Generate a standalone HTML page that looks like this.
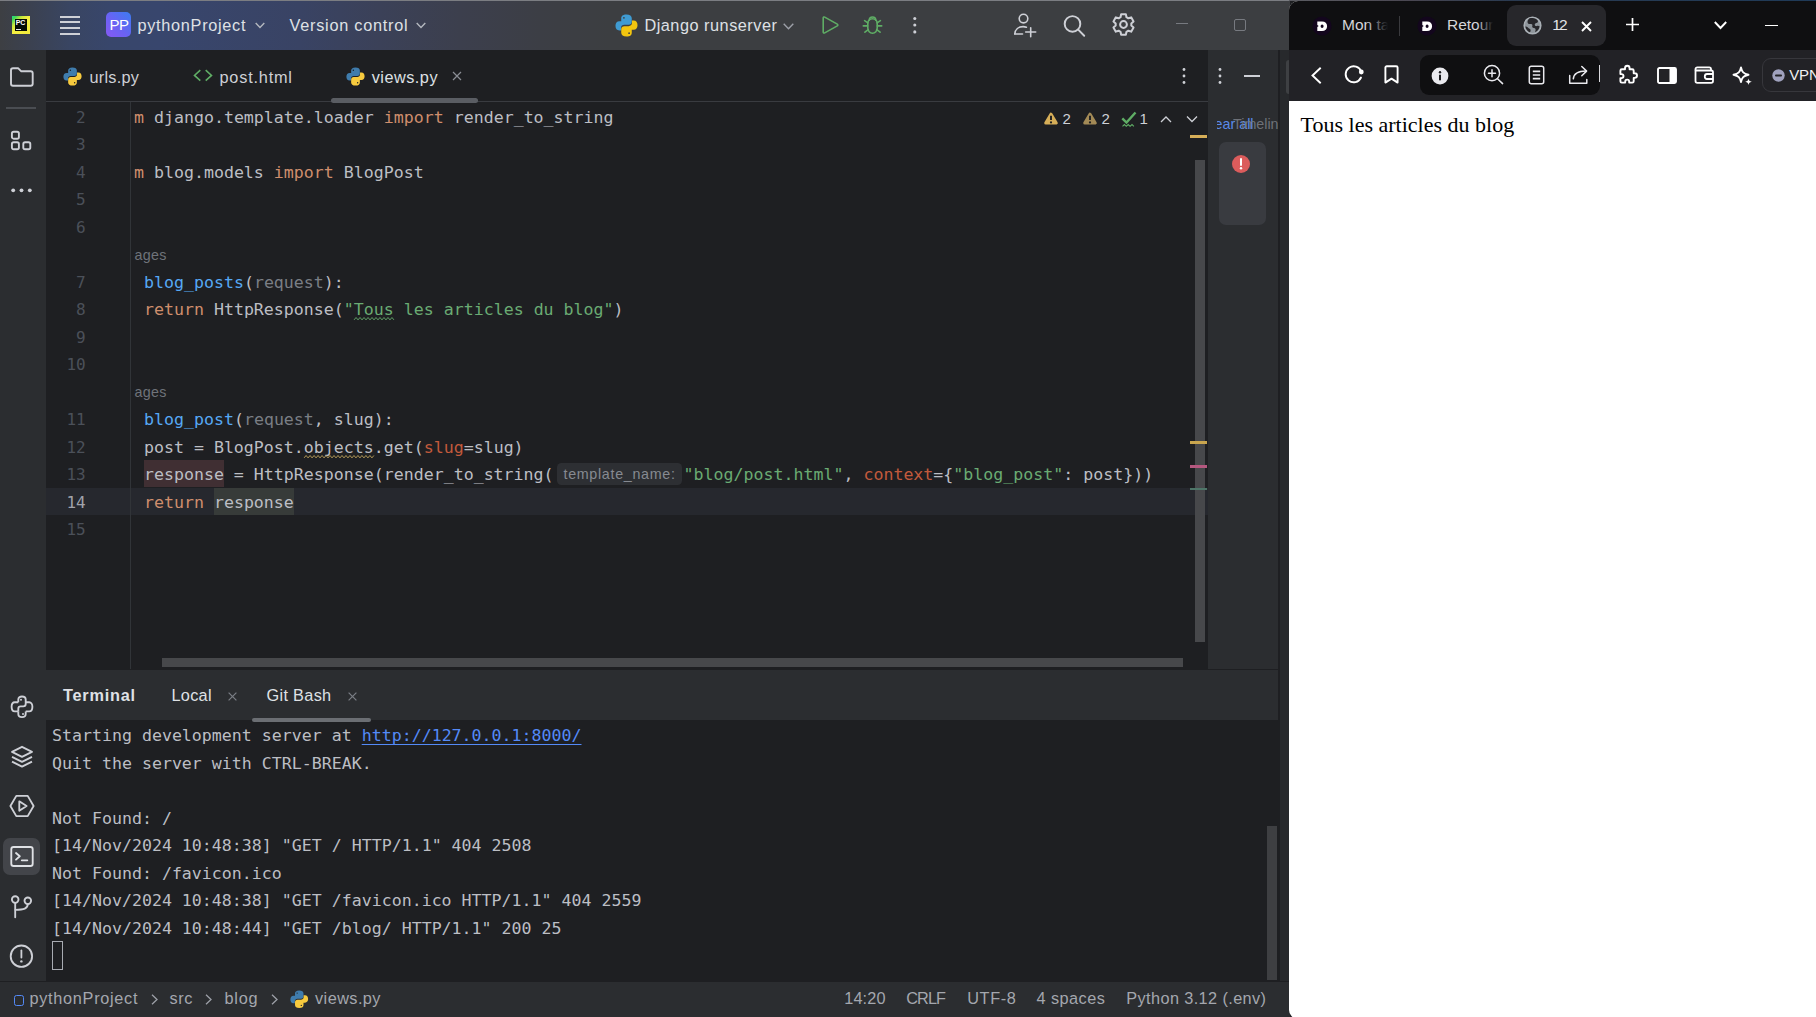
<!DOCTYPE html>
<html lang="fr">
<head>
<meta charset="utf-8">
<title>PyCharm + navigateur</title>
<style>
*{box-sizing:border-box;margin:0;padding:0}
html,body{width:1816px;height:1017px;overflow:hidden;background:#1e1f22}
body{position:relative;font-family:"Liberation Sans",sans-serif;color:#dfe1e5}
.abs{position:absolute}
.t{position:absolute;white-space:pre;line-height:1}
svg{position:absolute;overflow:visible}
/* ---------- IDE ---------- */
#ide{position:absolute;left:0;top:0;width:1290px;height:1017px;background:#1e1f22;overflow:hidden}
#titlebar{position:absolute;left:0;top:0;width:1290px;height:50px;
 background:linear-gradient(90deg,#3d3f43 0px,#3b4150 30px,#394562 70px,#38466b 110px,#38466d 160px,#394364 300px,#3b4158 380px,#3c3f4d 460px,#3c3e45 540px,#3c3e41 610px,#3c3e41 1290px)}
#topline{position:absolute;left:0;top:0;width:1290px;height:1px;background:#7b7d82}
#leftbar{position:absolute;left:0;top:50px;width:46px;height:932px;background:#2b2d30}
#tabbar{position:absolute;left:46px;top:50px;width:1162px;height:52px;background:#1e1f22;border-bottom:1px solid #393b40}
#editor{position:absolute;left:46px;top:102px;width:1162px;height:568px;background:#1e1f22;overflow:hidden}
#rightpanel{position:absolute;left:1208px;top:50px;width:70px;height:620px;background:#2b2d30}
#rightstrip{position:absolute;left:1277.5px;top:50px;width:12.5px;height:932px;background:#27292c;border-left:2.3px solid #1e1f22}
#termhead{position:absolute;left:46px;top:670px;width:1232px;height:50px;background:#2b2d30}
#term{position:absolute;left:46px;top:720px;width:1232px;height:262px;background:#1e1f22}
#status{position:absolute;left:0;top:981px;width:1290px;height:36px;background:#2b2d30;border-top:1px solid #1e1f22}
.ui{font-size:16.3px;color:#dfe1e5}
.code{font-family:"DejaVu Sans Mono","Liberation Mono",monospace;font-size:16.6px;color:#bcbec4}
.ln{position:absolute;left:46px;width:39.7px;text-align:right;font-family:"DejaVu Sans Mono","Liberation Mono",monospace;font-size:16px;color:#4b5059;line-height:1}
.k{color:#cf8e6d}.f{color:#56a8f5}.s{color:#6aab73}.g{color:#6f737a}.a{color:#c25a3c}
.cl{position:absolute;left:104px;white-space:pre;line-height:27.5px;height:27.5px}
.tl{position:absolute;left:52px;white-space:pre;line-height:27.5px;height:27.5px}
.u{color:#7a7e85}
.tw{}
.ww{}
.hintgap{display:inline-block;width:130px}
.inl{font-size:14.3px;color:#6f737a;letter-spacing:0.3px}
.hint{width:125px;height:22.6px;border-radius:4.5px;background:#2d2f33;color:#868a91;font-size:14.3px;line-height:22.6px;padding-left:7px;letter-spacing:0.68px;white-space:pre}
.lnk{color:#548af7;text-decoration:underline;text-underline-offset:3px;text-decoration-thickness:1px}
.st{font-size:16.3px;color:#a4a7ae}
/* ---------- Browser ---------- */
#br{position:absolute;left:1289px;top:1px;width:527px;height:1018px;background:#fff;border-top-left-radius:9px;border-bottom-left-radius:9px;overflow:hidden}
#brtabs{position:absolute;left:0;top:0;width:527px;height:49px;background:#0f0f11}
#brtool{position:absolute;left:0;top:49px;width:527px;height:51px;background:#222226}
.bt{font-size:15.5px;color:#d6d6da}
</style>
</head>
<body>
<div id="ide">
  <div id="titlebar"></div>
  <div id="topline"></div>
  <div id="leftbar"></div>
  <div id="tabbar"></div>
  <div id="editor"></div>
  <div id="rightpanel"></div>
  <div id="rightstrip"></div>
  <div id="termhead"></div>
  <div id="term"></div>
  <div id="status"></div>
  <!-- ===== title bar content ===== -->
  <!-- PyCharm logo -->
  <div class="abs" style="left:12px;top:16px;width:18.400px;height:18.400px;background:linear-gradient(135deg,#21d789 0%,#3fd75a 12%,#c8e83c 30%,#f4ef42 48%,#f1e93a 100%)"></div>
  <div class="abs" style="left:14.900px;top:18.900px;width:12.300px;height:12.300px;background:#050a05"></div>
  <div class="t" style="left:15.700px;top:19.400px;font-size:7px;font-weight:bold;color:#fff;letter-spacing:-0.2px">PC</div>
  <div class="abs" style="left:16.200px;top:28.700px;width:5px;height:1.200px;background:#e8e8e8"></div>
  <!-- hamburger -->
  <div class="abs" style="left:60px;top:15.7px;width:20px;height:2px;background:#ced0d6"></div>
  <div class="abs" style="left:60px;top:21.4px;width:20px;height:2px;background:#ced0d6"></div>
  <div class="abs" style="left:60px;top:27.1px;width:20px;height:2px;background:#ced0d6"></div>
  <div class="abs" style="left:60px;top:32.8px;width:20px;height:2px;background:#ced0d6"></div>
  <!-- project badge -->
  <div class="abs" style="left:106px;top:12px;width:25px;height:25px;border-radius:5px;background:linear-gradient(45deg,#8659f3 0%,#6a62f3 45%,#3b7cf2 100%)"></div>
  <div class="t" style="left:109.5px;top:17px;font-size:15px;color:#fff;letter-spacing:-0.6px">PP</div>
  <div class="t ui" id="t_proj" style="left:137.5px;top:16.5px;letter-spacing:0.7px">pythonProject</div>
  <svg style="left:255px;top:22px" width="10" height="7" viewBox="0 0 10 7"><path d="M0.7 0.9 L5 5.4 L9.3 0.9" fill="none" stroke="#b4b8bf" stroke-width="1.4"/></svg>
  <div class="t ui" id="t_vc" style="left:289.5px;top:16.5px;letter-spacing:0.74px">Version control</div>
  <svg style="left:416px;top:22px" width="10" height="7" viewBox="0 0 10 7"><path d="M0.7 0.9 L5 5.4 L9.3 0.9" fill="none" stroke="#b4b8bf" stroke-width="1.4"/></svg>
  <!-- run config -->
  <svg style="left:614.5px;top:13.5px" width="23" height="23" viewBox="0 0 24 24"><path d="M12 0.500C8 0.500 6.500 2.200 6.500 4.500V7.600H4.500C2 7.600 0.500 9.600 0.500 12.300C0.500 15.200 2 17.200 4.500 17.200H6.300V14.500C6.300 12.500 7.800 11.300 9.800 11.300H14.300C16.200 11.300 17.500 10 17.500 8.200V4.500C17.500 2 15.500 0.500 12 0.500z" fill="#3f9bd2"/><circle cx="9.300" cy="4" r="0.900" fill="#3c3e41"/><g transform="rotate(180 12 12)"><path d="M12 0.500C8 0.500 6.500 2.200 6.500 4.500V7.600H4.500C2 7.600 0.500 9.600 0.500 12.300C0.500 15.200 2 17.200 4.500 17.200H6.300V14.500C6.300 12.500 7.800 11.300 9.800 11.300H14.300C16.200 11.300 17.500 10 17.500 8.200V4.500C17.500 2 15.500 0.500 12 0.500z" fill="#f2c50f"/><circle cx="9.300" cy="4" r="0.900" fill="#3c3e41"/></g></svg>
  <div class="t ui" id="t_dj" style="left:644.4px;top:16.5px;letter-spacing:0.51px">Django runserver</div>
  <svg style="left:783px;top:23px" width="11" height="7" viewBox="0 0 11 7"><path d="M0.7 0.8 L5.5 5.7 L10.3 0.8" fill="none" stroke="#9da0a8" stroke-width="1.4"/></svg>
  <!-- run -->
  <svg style="left:821px;top:15px" width="20" height="20" viewBox="0 0 20 20"><path d="M2.2 2.9 C2.2 2.1 3 1.700 3.700 2.100 L16.300 9.100 C17 9.500 17 10.500 16.300 10.900 L3.700 17.900 C3 18.300 2.200 17.900 2.200 17.100 Z" fill="none" stroke="#5fad65" stroke-width="1.6" stroke-linejoin="round"/></svg>
  <!-- debug bug -->
  <svg style="left:862px;top:15px" width="21" height="20" viewBox="0 0 21 20"><g fill="none" stroke="#5fad65" stroke-width="1.6" stroke-linecap="round"><path d="M5.800 8.500 a4.700 4.700 0 0 1 9.400 0 v4.500 a4.700 5.200 0 0 1 -9.400 0 z"/><path d="M7.300 5.200 a3.200 3.200 0 0 1 6.400 0"/><path d="M5.600 10.900 H1.300 M15.400 10.900 H19.700 M5.900 7.800 L2.600 5.600 M15.100 7.800 L18.400 5.600 M6.300 14.600 L2.900 17.200 M14.700 14.600 L18.100 17.200"/></g></svg>
  <!-- kebab -->
  <svg style="left:912px;top:16px" width="6" height="18" viewBox="0 0 6 18"><g fill="#ced0d6"><circle cx="2.800" cy="2.500" r="1.550"/><circle cx="2.800" cy="9" r="1.550"/><circle cx="2.800" cy="15.900" r="1.550"/></g></svg>
  <!-- add user -->
  <svg style="left:1013px;top:13px" width="25" height="25" viewBox="0 0 25 25"><g fill="none" stroke="#ced0d6" stroke-width="1.6" stroke-linecap="round"><circle cx="10.500" cy="5.600" r="4.300"/><path d="M1.800 21 c0.300 -4.600 3.800 -7.400 8.300 -7.400 c1.200 0 2.300 0.200 3.300 0.600"/><path d="M1.800 21 H9.500"/><path d="M17.700 14.800 V23.800 M12.700 19 H22.700"/></g></svg>
  <!-- search -->
  <svg style="left:1062px;top:13px" width="25" height="25" viewBox="0 0 25 25"><g fill="none" stroke="#ced0d6" stroke-width="1.950" stroke-linecap="round"><circle cx="10.500" cy="10.900" r="7.800"/><path d="M16.200 16.600 L22.200 22.700"/></g></svg>
  <!-- gear -->
  <svg style="left:1111px;top:12.400px" width="25" height="25" viewBox="0 0 25 25"><g fill="none" stroke="#ced0d6" stroke-width="2" stroke-linejoin="round"><path d="M14.86 2.27 L10.14 2.27 L9.54 5.18 L7.64 6.27 L4.82 5.34 L2.46 9.43 L4.68 11.40 L4.68 13.60 L2.46 15.57 L4.82 19.66 L7.64 18.73 L9.54 19.82 L10.14 22.73 L14.86 22.73 L15.46 19.82 L17.36 18.73 L20.18 19.66 L22.54 15.57 L20.32 13.60 L20.32 11.40 L22.54 9.43 L20.18 5.34 L17.36 6.27 L15.46 5.18 Z"/><circle cx="12.500" cy="12.500" r="3.400"/></g></svg>
  <!-- window controls (inactive) -->
  <div class="abs" style="left:1176px;top:23px;width:12px;height:1.3px;background:#777a80"></div>
  <div class="abs" style="left:1234px;top:19px;width:12px;height:12px;border:1.3px solid #777a80;border-radius:2px"></div>

  <!-- ===== left tool bar icons ===== -->
  <svg style="left:9px;top:66px" width="26" height="22" viewBox="0 0 26 22"><path d="M2 4.200 C2 3.100 2.900 2.300 4 2.300 H9.300 L12.300 5.300 H21.700 C22.800 5.300 23.700 6.200 23.700 7.300 V17.700 C23.700 18.800 22.800 19.700 21.700 19.700 H4 C2.900 19.700 2 18.800 2 17.700 Z" fill="none" stroke="#ced0d6" stroke-width="1.900" stroke-linejoin="round"/></svg>
  <div class="abs" style="left:6px;top:107.200px;width:30px;height:1.600px;background:#4a4d52"></div>
  <svg style="left:10px;top:129px" width="24" height="24" viewBox="0 0 24 24"><g fill="none" stroke="#ced0d6" stroke-width="1.900"><rect x="1.900" y="2.700" width="7" height="7" rx="1.800"/><rect x="1.900" y="13.300" width="7" height="7" rx="1.800"/><rect x="13.300" y="13.300" width="7" height="7" rx="1.800"/></g></svg>
  <svg style="left:10px;top:186px" width="24" height="8" viewBox="0 0 24 8"><g fill="#ced0d6"><circle cx="3.200" cy="4.300" r="1.900"/><circle cx="11.500" cy="4.300" r="1.900"/><circle cx="19.800" cy="4.300" r="1.900"/></g></svg>
  <!-- python console -->
  <svg style="left:9.500px;top:695px" width="24" height="24" viewBox="0 0 24 24"><g fill="none" stroke="#ced0d6" stroke-width="1.850" stroke-linejoin="round"><path d="M8.300 7.200 V4.600 C8.300 2.700 9.800 1.500 12 1.500 C14.200 1.500 15.700 2.700 15.700 4.600 V9 C15.700 10.400 14.700 11.400 13.300 11.400 H10.700 C9.300 11.400 8.300 12.400 8.300 13.800 V16.400 M8.300 7.200 H4.800 C2.900 7.200 1.600 9 1.600 11.800 C1.600 14.600 2.900 16.400 4.800 16.400 H8.300"/><path d="M15.700 16.400 V19 C15.700 20.900 14.200 22.100 12 22.100 C9.800 22.100 8.300 20.900 8.300 19 V16.400 M15.700 16.400 H19.200 C21.100 16.400 22.400 14.600 22.400 11.800 C22.400 9 21.100 7.200 19.200 7.200 H15.700"/></g><circle cx="11" cy="4.700" r="1" fill="#ced0d6"/><circle cx="13" cy="18.900" r="1" fill="#ced0d6"/></svg>
  <!-- layers -->
  <svg style="left:10px;top:745px" width="24" height="24" viewBox="0 0 24 24"><g fill="none" stroke="#ced0d6" stroke-width="1.850" stroke-linejoin="round"><path d="M12 1.800 L22 6.800 L12 11.800 L2 6.800 Z"/><path d="M2 11.800 L12 16.800 L22 11.800"/><path d="M2 16.600 L12 21.600 L22 16.600"/></g></svg>
  <!-- services -->
  <svg style="left:9px;top:794px" width="26" height="24" viewBox="0 0 26 24"><g fill="none" stroke="#ced0d6" stroke-width="1.850" stroke-linejoin="round"><path d="M7.300 1.900 H18.700 L24.600 12 L18.700 22.100 H7.300 L1.400 12 Z"/><path d="M10.300 7.300 L17.600 12 L10.300 16.700 Z"/></g></svg>
  <!-- terminal (selected) -->
  <div class="abs" style="left:2.500px;top:838px;width:37px;height:37px;border-radius:7px;background:#43454a"></div>
  <svg style="left:10px;top:845px" width="24" height="23" viewBox="0 0 24 23"><g fill="none" stroke="#dfe1e5" stroke-width="1.850" stroke-linejoin="round" stroke-linecap="round"><rect x="1.300" y="2" width="21.400" height="19" rx="2.300"/><path d="M6 8 L9.800 11.300 L6 14.600"/><path d="M11.800 15.300 H17.300"/></g></svg>
  <!-- git -->
  <svg style="left:10px;top:894px" width="24" height="25" viewBox="0 0 24 25"><g fill="none" stroke="#ced0d6" stroke-width="1.850" stroke-linecap="round"><circle cx="5.200" cy="5.500" r="3.300"/><circle cx="17.800" cy="6.800" r="3.300"/><path d="M5.200 8.800 V23.300"/><path d="M17.800 10.100 C17.800 14.500 14 15.800 5.400 15.800"/></g></svg>
  <!-- problems -->
  <svg style="left:9px;top:944px" width="25" height="25" viewBox="0 0 25 25"><circle cx="12.400" cy="12.200" r="10.700" fill="none" stroke="#ced0d6" stroke-width="1.850"/><path d="M12.400 6.400 V13.600" stroke="#ced0d6" stroke-width="1.800" stroke-linecap="round"/><circle cx="12.400" cy="17.400" r="1.200" fill="#ced0d6"/></svg>

  <!-- ===== editor tabs ===== -->
  <svg style="left:63px;top:67px" width="19" height="19" viewBox="0 0 24 24"><path d="M12 0.500C8 0.500 6.500 2.200 6.500 4.500V7.600H4.500C2 7.600 0.500 9.600 0.500 12.300C0.500 15.200 2 17.200 4.500 17.200H6.300V14.500C6.300 12.500 7.800 11.300 9.800 11.300H14.300C16.200 11.300 17.500 10 17.500 8.200V4.500C17.500 2 15.500 0.500 12 0.500z" fill="#3f7cad"/><circle cx="9.300" cy="4" r="0.900" fill="#1e1f22"/><g transform="rotate(180 12 12)"><path d="M12 0.500C8 0.500 6.500 2.200 6.500 4.500V7.600H4.500C2 7.600 0.500 9.600 0.500 12.300C0.500 15.200 2 17.200 4.500 17.200H6.300V14.500C6.300 12.500 7.800 11.300 9.800 11.300H14.300C16.200 11.300 17.500 10 17.500 8.200V4.500C17.500 2 15.500 0.500 12 0.500z" fill="#f7ca3e"/><circle cx="9.300" cy="4" r="0.900" fill="#1e1f22"/></g></svg>
  <div class="t ui" id="t_urls" style="left:89.500px;top:68.500px;color:#ced0d6;letter-spacing:0.26px">urls.py</div>
  <svg style="left:193px;top:69px" width="20" height="13" viewBox="0 0 20 13"><path d="M7.300 1.200 L1.500 6.400 L7.300 11.600 M12.700 1.200 L18.500 6.400 L12.700 11.600" fill="none" stroke="#5fad65" stroke-width="1.600"/></svg>
  <div class="t ui" id="t_post" style="left:219.500px;top:68.500px;color:#ced0d6;letter-spacing:0.8px">post.html</div>
  <svg style="left:345.5px;top:67px" width="19" height="19" viewBox="0 0 24 24"><path d="M12 0.500C8 0.500 6.500 2.200 6.500 4.500V7.600H4.500C2 7.600 0.500 9.600 0.500 12.300C0.500 15.200 2 17.200 4.500 17.200H6.300V14.500C6.300 12.500 7.800 11.300 9.800 11.300H14.300C16.200 11.300 17.500 10 17.500 8.200V4.500C17.500 2 15.500 0.500 12 0.500z" fill="#3f7cad"/><circle cx="9.300" cy="4" r="0.900" fill="#1e1f22"/><g transform="rotate(180 12 12)"><path d="M12 0.500C8 0.500 6.500 2.200 6.500 4.500V7.600H4.500C2 7.600 0.500 9.600 0.500 12.300C0.500 15.200 2 17.200 4.500 17.200H6.300V14.500C6.300 12.500 7.800 11.300 9.800 11.300H14.300C16.200 11.300 17.500 10 17.500 8.200V4.500C17.500 2 15.500 0.500 12 0.500z" fill="#f7ca3e"/><circle cx="9.300" cy="4" r="0.900" fill="#1e1f22"/></g></svg>
  <div class="t ui" id="t_views" style="left:371.700px;top:68.500px;letter-spacing:0.49px">views.py</div>
  <svg style="left:452px;top:71px" width="10" height="10" viewBox="0 0 10 10"><path d="M1 1 L9 9 M9 1 L1 9" stroke="#8b8e95" stroke-width="1.200" fill="none"/></svg>
  <div class="abs" style="left:330.500px;top:97.500px;width:147px;height:5px;border-radius:2.500px;background:#5a5d63"></div>
  <svg style="left:1181px;top:67px" width="6" height="18" viewBox="0 0 6 18"><g fill="#ced0d6"><circle cx="3" cy="2.500" r="1.400"/><circle cx="3" cy="9" r="1.400"/><circle cx="3" cy="15.500" r="1.400"/></g></svg>
  <!-- ===== editor ===== -->
  <div class="abs" style="left:46px;top:487.5px;width:1162px;height:27px;background:#26282e"></div>
  <div class="abs" style="left:144px;top:460px;width:80px;height:27px;background:#402f33"></div>
  <div class="abs" style="left:214px;top:487.5px;width:80px;height:27px;background:#373b39"></div>
  <div class="abs" style="left:130px;top:102px;width:1px;height:568px;background:#313438"></div>
  <div class="ln code" style="top:103.95px;color:#4b5059;line-height:27.5px">2</div>
  <div class="ln code" style="top:131.45px;color:#4b5059;line-height:27.5px">3</div>
  <div class="ln code" style="top:158.95px;color:#4b5059;line-height:27.5px">4</div>
  <div class="ln code" style="top:186.45px;color:#4b5059;line-height:27.5px">5</div>
  <div class="ln code" style="top:213.95px;color:#4b5059;line-height:27.5px">6</div>
  <div class="ln code" style="top:268.95px;color:#4b5059;line-height:27.5px">7</div>
  <div class="ln code" style="top:296.45px;color:#4b5059;line-height:27.5px">8</div>
  <div class="ln code" style="top:323.95px;color:#4b5059;line-height:27.5px">9</div>
  <div class="ln code" style="top:351.45px;color:#4b5059;line-height:27.5px">10</div>
  <div class="ln code" style="top:406.45px;color:#4b5059;line-height:27.5px">11</div>
  <div class="ln code" style="top:433.95px;color:#4b5059;line-height:27.5px">12</div>
  <div class="ln code" style="top:461.45px;color:#4b5059;line-height:27.5px">13</div>
  <div class="ln code" style="top:488.95px;color:#a1a3ab;line-height:27.5px">14</div>
  <div class="ln code" style="top:516.45px;color:#4b5059;line-height:27.5px">15</div>
  <div id="codeclip" class="abs" style="left:134px;top:102.6px;width:1055px;height:556px;overflow:hidden">
    <div class="cl code" style="left:-30px;top:1.25px"><span class="k">from</span> django.template.loader <span class="k">import</span> render_to_string</div>
    <div class="cl code" style="left:-30px;top:56.25px"><span class="k">from</span> blog.models <span class="k">import</span> BlogPost</div>
    <div class="cl code" style="left:-30px;top:166.25px"><span class="k">def</span> <span class="f">blog_posts</span>(<span class="u">request</span>):</div>
    <div class="cl code" style="left:-30px;top:193.75px">    <span class="k">return</span> HttpResponse(<span class="s">"<span class="tw">Tous</span> les articles du blog"</span>)</div>
    <div class="cl code" style="left:-30px;top:303.75px"><span class="k">def</span> <span class="f">blog_post</span>(<span class="u">request</span>, slug):</div>
    <div class="cl code" style="left:-30px;top:331.25px">    post = BlogPost.<span class="ww">objects</span>.get(<span class="a">slug</span>=slug)</div>
    <div class="cl code" style="left:-30px;top:358.75px">    response = HttpResponse(render_to_string(<span class="hintgap"></span><span class="s">"blog/post.html"</span>, <span class="a">context</span>={<span class="s">"blog_post"</span>: post}))</div>
    <div class="cl code" style="left:-30px;top:386.25px">    <span class="k">return</span> response</div>
    <div class="t inl" style="left:-27.7px;top:145.25px">2 usages</div>
    <div class="t inl" style="left:-27.7px;top:282.75px">2 usages</div>
    <div class="abs hint" style="left:422.5px;top:360px">template_name:</div>
  </div>

  <svg style="left:354px;top:317px" width="40" height="3.4" viewBox="0 -0.5 40 3.4"><path d="M0.0 2.4 L2.0 0.0 L4.0 2.4 L6.0 0.0 L8.0 2.4 L10.0 0.0 L12.0 2.4 L14.0 0.0 L16.0 2.4 L18.0 0.0 L20.0 2.4 L22.0 0.0 L24.0 2.4 L26.0 0.0 L28.0 2.4 L30.0 0.0 L32.0 2.4 L34.0 0.0 L36.0 2.4 L38.0 0.0 L40.0 2.4" fill="none" stroke="#5c9e63" stroke-width="1.0"/></svg>
  <svg style="left:304px;top:454.5px" width="70" height="3.4" viewBox="0 -0.5 70 3.4"><path d="M0.0 2.4 L2.0 0.0 L4.0 2.4 L6.0 0.0 L8.0 2.4 L10.0 0.0 L12.0 2.4 L14.0 0.0 L16.0 2.4 L18.0 0.0 L20.0 2.4 L22.0 0.0 L24.0 2.4 L26.0 0.0 L28.0 2.4 L30.0 0.0 L32.0 2.4 L34.0 0.0 L36.0 2.4 L38.0 0.0 L40.0 2.4 L42.0 0.0 L44.0 2.4 L46.0 0.0 L48.0 2.4 L50.0 0.0 L52.0 2.4 L54.0 0.0 L56.0 2.4 L58.0 0.0 L60.0 2.4 L62.0 0.0 L64.0 2.4 L66.0 0.0 L68.0 2.4 L70.0 0.0" fill="none" stroke="#b09655" stroke-width="1.0"/></svg>
  <!-- ===== editor right: inspections, scrollbars, markers ===== -->
  <svg style="left:1043px;top:111px" width="16" height="15" viewBox="0 0 16 15"><path d="M8 3.300 L13.200 12 H2.800 Z" fill="#d6ae58" stroke="#d6ae58" stroke-width="3.200" stroke-linejoin="round"/><path d="M8 4.800 V9" stroke="#1e1f22" stroke-width="1.900"/><circle cx="8" cy="11.400" r="1.100" fill="#1e1f22"/></svg>
  <div class="t" style="left:1062.500px;top:110.800px;font-size:15px;color:#ced0d6">2</div>
  <svg style="left:1082px;top:111px" width="16" height="15" viewBox="0 0 16 15"><path d="M8 3.300 L13.200 12 H2.800 Z" fill="#a38a56" stroke="#a38a56" stroke-width="3.200" stroke-linejoin="round"/><path d="M8 4.800 V9" stroke="#1e1f22" stroke-width="1.900"/><circle cx="8" cy="11.400" r="1.100" fill="#1e1f22"/></svg>
  <div class="t" style="left:1101.500px;top:110.800px;font-size:15px;color:#ced0d6">2</div>
  <svg style="left:1121px;top:111px" width="16" height="17" viewBox="0 0 16 17"><path d="M1.300 7.300 L5.500 11.500 L14.500 1.500" fill="none" stroke="#5fad65" stroke-width="2.400"/><path d="M1.500 15.300 L3.400 13.500 L5.300 15.300 L7.200 13.500 L9.100 15.300 L11 13.500 L12.900 15.300" fill="none" stroke="#5fad65" stroke-width="1.100"/></svg>
  <div class="t" style="left:1139.500px;top:110.800px;font-size:15px;color:#ced0d6">1</div>
  <svg style="left:1160px;top:115px" width="12" height="8" viewBox="0 0 12 8"><path d="M1 7 L6 2 L11 7" fill="none" stroke="#ced0d6" stroke-width="1.300"/></svg>
  <svg style="left:1186px;top:115px" width="12" height="8" viewBox="0 0 12 8"><path d="M1 1.500 L6 6.500 L11 1.500" fill="none" stroke="#ced0d6" stroke-width="1.300"/></svg>
  <div class="abs" style="left:1190px;top:134.500px;width:17px;height:3px;background:#d6ae58"></div>
  <div class="abs" style="left:1195px;top:160px;width:10px;height:482px;background:#47484b"></div>
  <div class="abs" style="left:1190px;top:440.500px;width:17px;height:3px;background:#c9a54e"></div>
  <div class="abs" style="left:1190px;top:464.500px;width:17px;height:3px;background:#b5587f"></div>
  <div class="abs" style="left:1190px;top:487.500px;width:17px;height:2.500px;background:#4e7568"></div>
  <div class="abs" style="left:162px;top:657.500px;width:1021px;height:9px;background:#47484b"></div>
  <div class="abs" style="left:46px;top:669px;width:1232px;height:1px;background:#1e1f22"></div>

  <!-- ===== right panel ===== -->
  <svg style="left:1217px;top:67px" width="6" height="18" viewBox="0 0 6 18"><g fill="#ced0d6"><circle cx="3" cy="2.500" r="1.400"/><circle cx="3" cy="9" r="1.400"/><circle cx="3" cy="15.500" r="1.400"/></g></svg>
  <div class="abs" style="left:1244px;top:75px;width:16px;height:1.700px;background:#ced0d6"></div>
  <div class="abs" style="left:1217px;top:112px;width:36.500px;height:22px;overflow:hidden"><div class="t" style="right:0;top:5px;font-size:14.300px;color:#5a8ae8">Clear all</div></div>
  <div class="abs" style="left:1233px;top:112px;width:45px;height:22px;overflow:hidden"><div class="t" style="left:0;top:5px;font-size:14.300px;color:#7a7e85;opacity:.85">Timeline</div></div>
  <div class="abs" style="left:1219px;top:142px;width:47px;height:83px;border-radius:7px;background:#393b40"></div>
  <svg style="left:1231px;top:154px" width="20" height="20" viewBox="0 0 20 20"><circle cx="10" cy="10" r="9" fill="#db5c5c"/><path d="M10 5 V11" stroke="#fff" stroke-width="2" stroke-linecap="round"/><circle cx="10" cy="14.300" r="1.200" fill="#fff"/></svg>
  <div class="abs" style="left:1286px;top:60px;width:4px;height:34px;border-radius:3px 0 0 3px;background:#3e4043"></div>
  <!-- ===== terminal ===== -->
  <div class="t ui" id="t_term" style="left:63px;top:686.500px;font-weight:bold;letter-spacing:0.76px">Terminal</div>
  <div class="t ui" id="t_local" style="left:171.5px;top:686.500px;letter-spacing:0.27px">Local</div>
  <svg style="left:228px;top:692px" width="9" height="9" viewBox="0 0 9 9"><path d="M0.600 0.600 L8.400 8.400 M8.400 0.600 L0.600 8.400" stroke="#7a7e85" stroke-width="1.200" fill="none"/></svg>
  <div class="t ui" id="t_gb" style="left:266.5px;top:686.500px;letter-spacing:0.32px">Git Bash</div>
  <svg style="left:348px;top:692px" width="9" height="9" viewBox="0 0 9 9"><path d="M0.600 0.600 L8.400 8.400 M8.400 0.600 L0.600 8.400" stroke="#7a7e85" stroke-width="1.200" fill="none"/></svg>
  <div class="abs" style="left:251.500px;top:717.500px;width:119.500px;height:4px;border-radius:2px;background:#6b6e73"></div>
  <div class="tl code" style="top:722.25px">Starting development server at <span class="lnk">http://127.0.0.1:8000/</span></div>
  <div class="tl code" style="top:749.75px">Quit the server with CTRL-BREAK.</div>
  <div class="tl code" style="top:804.75px">Not Found: /</div>
  <div class="tl code" style="top:832.25px">[14/Nov/2024 10:48:38] "GET / HTTP/1.1" 404 2508</div>
  <div class="tl code" style="top:859.75px">Not Found: /favicon.ico</div>
  <div class="tl code" style="top:887.25px">[14/Nov/2024 10:48:38] "GET /favicon.ico HTTP/1.1" 404 2559</div>
  <div class="tl code" style="top:914.75px">[14/Nov/2024 10:48:44] "GET /blog/ HTTP/1.1" 200 25</div>
  <div class="abs" style="left:52px;top:941px;width:11px;height:29px;border:1px solid #a8abb2"></div>
  <div class="abs" style="left:1267px;top:826px;width:10px;height:154px;background:#3e3f42"></div>
  <!-- ===== status bar ===== -->
  <div class="abs" style="left:14px;top:995px;width:10.300px;height:10.500px;border:1.700px solid #548af7;border-radius:2.500px"></div>
  <div class="t st" id="s_proj" style="left:29.500px;top:990.400px;letter-spacing:0.7px">pythonProject</div>
  <svg style="left:150.5px;top:994px" width="8" height="11" viewBox="0 0 8 11"><path d="M1 0.800 L6 5.500 L1 10.200" fill="none" stroke="#9da0a8" stroke-width="1.300"/></svg>
  <div class="t st" id="s_src" style="left:169.500px;top:990.400px;letter-spacing:0.65px">src</div>
  <svg style="left:205px;top:994px" width="8" height="11" viewBox="0 0 8 11"><path d="M1 0.800 L6 5.500 L1 10.200" fill="none" stroke="#9da0a8" stroke-width="1.300"/></svg>
  <div class="t st" id="s_blog" style="left:224.500px;top:990.400px;letter-spacing:0.74px">blog</div>
  <svg style="left:270.5px;top:994px" width="8" height="11" viewBox="0 0 8 11"><path d="M1 0.800 L6 5.500 L1 10.200" fill="none" stroke="#9da0a8" stroke-width="1.300"/></svg>
  <svg style="left:290px;top:990px" width="18.5" height="18.5" viewBox="0 0 24 24"><path d="M12 0.500C8 0.500 6.500 2.200 6.500 4.500V7.600H4.500C2 7.600 0.500 9.600 0.500 12.300C0.500 15.200 2 17.200 4.500 17.200H6.300V14.500C6.300 12.500 7.800 11.300 9.800 11.300H14.300C16.200 11.300 17.500 10 17.500 8.200V4.500C17.500 2 15.500 0.500 12 0.500z" fill="#3f7cad"/><circle cx="9.300" cy="4" r="0.900" fill="#2b2d30"/><g transform="rotate(180 12 12)"><path d="M12 0.500C8 0.500 6.500 2.200 6.500 4.500V7.600H4.500C2 7.600 0.500 9.600 0.500 12.300C0.500 15.200 2 17.200 4.500 17.200H6.300V14.500C6.300 12.500 7.800 11.300 9.800 11.300H14.300C16.200 11.300 17.500 10 17.500 8.200V4.500C17.500 2 15.500 0.500 12 0.500z" fill="#f7ca3e"/><circle cx="9.300" cy="4" r="0.900" fill="#2b2d30"/></g></svg>
  <div class="t st" id="s_views" style="left:315px;top:990.400px;letter-spacing:0.44px">views.py</div>
  <div class="t st" id="s_pos" style="left:844.200px;top:990.400px;letter-spacing:0.16px">14:20</div>
  <div class="t st" id="s_crlf" style="left:906.300px;top:990.400px;letter-spacing:-0.94px">CRLF</div>
  <div class="t st" id="s_utf" style="left:967.200px;top:990.400px;letter-spacing:0.62px">UTF-8</div>
  <div class="t st" id="s_sp" style="left:1036.500px;top:990.400px;letter-spacing:0.45px">4 spaces</div>
  <div class="t st" id="s_py" style="left:1126.300px;top:990.400px;letter-spacing:0.39px">Python 3.12 (.env)</div>
</div>
<div class="abs" style="left:1289px;top:0;width:527px;height:1px;background:linear-gradient(90deg,#5b5c62 0,#4a4752 120px,#2a3a50 220px,#1f3a58 527px)"></div>
<div id="br">
  <div id="brtabs"></div>
  <div id="brtool"></div>
  <!-- tabs -->
  <svg style="left:23px;top:14.6px" width="20" height="20" viewBox="0 0 20 20"><circle cx="10" cy="10" r="9.600" fill="#13061d"/><path d="M5.300 5.400 H10 C13.200 5.400 15.100 7.300 15.100 10.200 C15.100 13.100 13.200 15 10 15 H5.300 V10.900 L6.700 10 L5.300 9 Z M8.600 10.200 A1.500 1.700 0 1 0 11.600 10.200 A1.500 1.700 0 1 0 8.600 10.200 Z" fill="#fff" fill-rule="evenodd"/></svg>
  <div class="abs" style="left:53px;top:13px;width:46px;height:24px;overflow:hidden"><div class="t bt" style="left:0;top:3.200px">Mon tableau</div><div class="abs" style="right:0;top:0;width:22px;height:24px;background:linear-gradient(90deg,rgba(15,15,17,0),#0f0f11)"></div></div>
  <div class="abs" style="left:110px;top:14.5px;width:1.300px;height:20px;background:#3a3a3e"></div>
  <svg style="left:128px;top:14.6px" width="20" height="20" viewBox="0 0 20 20"><circle cx="10" cy="10" r="9.600" fill="#13061d"/><path d="M5.300 5.400 H10 C13.200 5.400 15.100 7.300 15.100 10.200 C15.100 13.100 13.200 15 10 15 H5.300 V10.900 L6.700 10 L5.300 9 Z M8.600 10.200 A1.500 1.700 0 1 0 11.600 10.200 A1.500 1.700 0 1 0 8.600 10.200 Z" fill="#fff" fill-rule="evenodd"/></svg>
  <div class="abs" style="left:158px;top:13px;width:46px;height:24px;overflow:hidden"><div class="t bt" style="left:0;top:3.200px">Retour</div><div class="abs" style="right:0;top:0;width:16px;height:24px;background:linear-gradient(90deg,rgba(15,15,17,0),#0f0f11)"></div></div>
  <div class="abs" style="left:218px;top:4px;width:99px;height:41px;border-radius:9px;background:#27272b"></div>
  <svg style="left:233.5px;top:15px" width="19" height="19" viewBox="0 0 19 19"><circle cx="9.500" cy="9.500" r="8.300" fill="#8f969c" stroke="#a9afb5" stroke-width="1.600"/><path d="M6.500 2.300 C5 3.500 4.300 5 4.600 6.600 C5 8 6.300 8.300 7.600 8 C9 7.700 9.700 8.600 9.300 9.800 C8.900 11 9.500 12 10.800 12.100 C12.300 12.200 12.900 13.200 12.500 14.500 L12 16.300 C14.500 15.300 16.300 13 16.600 10.300 C15.600 9.500 14.600 9.600 13.800 10 C12.900 10.400 12 10 11.800 9 C11.600 7.900 12.300 7.200 13.400 7 C14.600 6.800 15.200 6 14.900 4.800 C13.600 3 11.600 2 9.500 2 C8.400 2 7.400 2.100 6.500 2.300 Z" fill="#27272b"/><path d="M2.300 10.500 C3.300 10.300 4.300 10.700 4.900 11.600 C5.500 12.500 6.500 12.700 7.200 13.300 C7.900 14 7.700 15.200 7 16.300 C4.500 15.400 2.700 13.200 2.300 10.500 Z" fill="#27272b"/></svg>
  <div class="t bt" style="left:263.2px;top:16.2px;color:#e4e4e6;letter-spacing:-1.7px">12</div>
  <svg style="left:292px;top:19.5px" width="11" height="11" viewBox="0 0 11 11"><path d="M1 1 L10 10 M10 1 L1 10" stroke="#fff" stroke-width="1.900" fill="none"/></svg>
  <svg style="left:337px;top:16.5px" width="13" height="13" viewBox="0 0 13 13"><path d="M6.500 0 V13 M0 6.500 H13" stroke="#fff" stroke-width="1.700" fill="none"/></svg>
  <svg style="left:425px;top:20px" width="13" height="9" viewBox="0 0 13 9"><path d="M0.800 1 L6.500 7 L12.200 1" stroke="#fff" stroke-width="1.900" fill="none"/></svg>
  <div class="abs" style="left:475.5px;top:23.6px;width:13.500px;height:1.500px;background:#fff"></div>
  <!-- toolbar -->
  <svg style="left:22px;top:65.5px" width="11" height="17" viewBox="0 0 11 17"><path d="M9.700 0.800 L1.500 8.500 L9.700 16.200" stroke="#fff" stroke-width="1.900" fill="none"/></svg>
  <svg style="left:54.5px;top:63.2px" width="20" height="20" viewBox="0 0 20 20"><path d="M17.200 7.600 A8 8 0 1 0 17 13.500" stroke="#fff" stroke-width="1.900" fill="none" stroke-linecap="round"/><circle cx="17.300" cy="8" r="2.400" fill="#fff"/></svg>
  <svg style="left:95px;top:63.9px" width="15" height="19" viewBox="0 0 15 19"><path d="M1.400 2.600 C1.400 1.800 2 1.200 2.800 1.200 H12.200 C13 1.200 13.600 1.800 13.600 2.600 V17.600 L7.500 13.600 L1.400 17.600 Z" stroke="#fff" stroke-width="1.900" fill="none" stroke-linejoin="round"/></svg>
  <div class="abs" style="left:131px;top:54px;width:180px;height:39.500px;border-radius:9px;background:#0f0f11"></div>
  <svg style="left:142px;top:65.5px" width="18" height="18" viewBox="0 0 18 18"><circle cx="9" cy="9" r="8.400" fill="#e9e9ee"/><rect x="8" y="7.700" width="2" height="5.600" fill="#1b1b1f"/><circle cx="9" cy="5.200" r="1.200" fill="#1b1b1f"/></svg>
  <svg style="left:193.9px;top:62.6px" width="21" height="21" viewBox="0 0 21 21"><g stroke="#e9e9ee" stroke-width="1.500" fill="none" stroke-linecap="round"><circle cx="9" cy="9.200" r="7.600"/><path d="M14.500 14.700 L19.600 19.600"/><path d="M9 5.700 V12.700 M5.500 9.200 H12.500"/></g></svg>
  <svg style="left:239px;top:64px" width="17" height="20" viewBox="0 0 17 20"><g stroke="#e9e9ee" stroke-width="1.500" fill="none"><rect x="1.300" y="1.200" width="14.400" height="17.600" rx="2"/><path d="M4.800 6.300 H12.200 M4.800 10 H12.200 M4.800 13.700 H12.200" stroke-width="1.700"/></g></svg>
  <svg style="left:279px;top:64px" width="21" height="20" viewBox="0 0 21 20"><g stroke="#e9e9ee" stroke-width="1.500" fill="none" stroke-linejoin="round" stroke-linecap="round"><path d="M1.700 10.500 V18.300 H18.800 V14.500"/><path d="M5.300 13.800 C5.800 9 9.500 6.200 18 6.100"/><path d="M13.800 1.500 L18.600 6.100 L13.800 10.700"/></g></svg>
  <div class="abs" style="left:310px;top:64px;width:1.400px;height:16.500px;background:#d8d8dc"></div>
  <svg style="left:328px;top:63.3px" width="21" height="21" viewBox="0 0 21 21"><path d="M8 4.200 C8 2.700 9 1.700 10.300 1.700 C11.600 1.700 12.600 2.700 12.600 4.200 V5.300 H15.300 C16.100 5.300 16.700 5.900 16.700 6.700 V9.300 H17.600 C19 9.300 20 10.300 20 11.600 C20 12.900 19 13.900 17.600 13.900 H16.700 V17.200 C16.700 18 16.100 18.600 15.300 18.600 H12.200 V17.700 C12.200 16.400 11.300 15.600 10.200 15.600 C9.100 15.600 8.200 16.400 8.200 17.700 V18.600 H4.800 C4 18.600 3.400 18 3.400 17.200 V14.100 H4.400 C5.700 14.100 6.500 13.200 6.500 12.100 C6.500 11 5.700 10.100 4.400 10.100 H3.400 V6.700 C3.400 5.900 4 5.300 4.800 5.300 H8 Z" stroke="#fff" stroke-width="1.900" fill="none" stroke-linejoin="round"/></svg>
  <svg style="left:367.5px;top:66px" width="20" height="17" viewBox="0 0 20 17"><rect x="1" y="1" width="18" height="15" rx="1.500" stroke="#fff" stroke-width="1.900" fill="none"/><rect x="12.500" y="1" width="6.500" height="15" fill="#fff"/></svg>
  <svg style="left:405px;top:65px" width="21" height="18" viewBox="0 0 21 18"><g stroke="#fff" stroke-width="1.800" fill="none" stroke-linejoin="round"><path d="M1.500 4.500 V15 C1.500 16 2.300 16.800 3.300 16.800 H17.200 C18.200 16.800 19 16 19 15 V6.300 C19 5.300 18.200 4.500 17.200 4.500 Z"/><path d="M1.500 4.500 V3.200 C1.500 2.200 2.300 1.400 3.300 1.400 H15.200 C16.200 1.400 17 2.200 17 3.200 V4.500"/><path d="M19 8 H13 C11.800 8 10.800 9 10.800 10.500 C10.800 12 11.800 13 13 13 H19"/></g></svg>
  <svg style="left:442.5px;top:64.5px" width="21" height="20" viewBox="0 0 21 20"><path d="M9 1.500 C9.900 6 11.500 7.700 16.500 8.800 C11.500 9.900 9.900 11.600 9 16.100 C8.100 11.600 6.500 9.900 1.500 8.800 C6.500 7.700 8.100 6 9 1.500 Z" stroke="#fff" stroke-width="1.900" fill="none" stroke-linejoin="round"/><path d="M16.500 12.500 C16.900 14.600 17.500 15.200 19.800 15.700 C17.500 16.200 16.900 16.800 16.500 18.900 C16.100 16.800 15.500 16.200 13.200 15.700 C15.500 15.200 16.100 14.600 16.500 12.500 Z" fill="#fff"/></svg>
  <div class="abs" style="left:473px;top:57px;width:70px;height:34px;border-radius:9px;border:1px solid #37373c"></div>
  <svg style="left:482.5px;top:67.8px" width="13" height="13" viewBox="0 0 13 13"><circle cx="6.500" cy="6.500" r="6.200" fill="#9fa1bd"/><rect x="3" y="5.600" width="7" height="1.900" rx=".9" fill="#222226"/></svg>
  <div class="t" style="left:500.3px;top:66.3px;font-size:15px;color:#f0f0f2;letter-spacing:-0.2px">VPN</div>
  <!-- page -->
  <div class="t" id="pg" style="left:11.6px;top:112.9px;font-family:'Liberation Serif',serif;font-size:22px;color:#000">Tous les articles du blog</div>
</div>
</body>
</html>
